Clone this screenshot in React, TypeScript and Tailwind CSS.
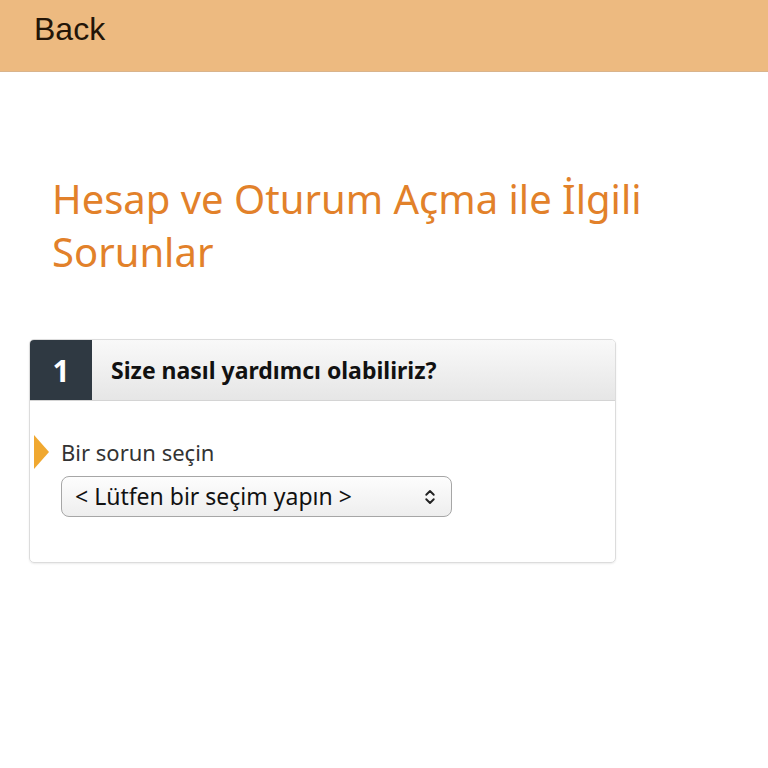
import { ChevronsUpDown } from "lucide-react";

const font = { fontFamily: '"Noto Sans", "Open Sans", sans-serif' };

const App = () => {
	return (
		<div className="w-[768px] h-[768px] bg-white" style={font}>
			<div className="h-[72px] bg-[#EDBA80] border-b border-[#d9b48c] pl-[34px] pt-[5px]">
				<div className="text-[32px] text-[#231508] font-['Liberation_Sans',sans-serif]">Back</div>
			</div>

			<div className="px-[52px] pt-[100px]">
				<h1 className="text-[40px] leading-[53px] text-[#E2812A]">
					Hesap ve Oturum Açma ile İlgili
					<br />
					Sorunlar
				</h1>
			</div>

			<div className="ml-[29px] mt-[61px] w-[587px] border border-[#dcdcdc] rounded-[5px] shadow-[0_1px_2px_rgba(0,0,0,0.08)] overflow-hidden">
				<div className="flex h-[61px] bg-gradient-to-b from-[#f9f9f9] to-[#e6e6e6] border-b border-[#d4d4d4]">
					<div className="w-[62px] bg-[#2f3942] text-white text-[30px] font-bold flex items-center justify-center">1</div>
					<div className="pl-[19px] flex items-center text-[23px] font-bold text-[#111]">
						Size nasıl yardımcı olabiliriz?
					</div>
				</div>
				<div className="pt-[34px] pb-[45px]">
					<div className="flex items-center">
						<div className="w-[31px] flex pl-[4px]">
							<div className="w-0 h-0 border-y-[17px] border-y-transparent border-l-[15px] border-l-[#F0A830]" />
						</div>
						<div className="text-[22px] text-[#333]">Bir sorun seçin</div>
					</div>
					<div className="ml-[31px] mt-[7px] w-[391px] h-[41px] rounded-[8px] border border-[#a6a6a6] bg-gradient-to-b from-[#fdfdfd] to-[#eeeeee] flex items-center justify-between pl-[13px] pr-[12px]">
						<span className="text-[23px] text-[#111]">&lt; Lütfen bir seçim yapın &gt;</span>
						<ChevronsUpDown size={18} strokeWidth={2.5} className="text-[#222]" />
					</div>
				</div>
			</div>
		</div>
	);
};

export default App;
